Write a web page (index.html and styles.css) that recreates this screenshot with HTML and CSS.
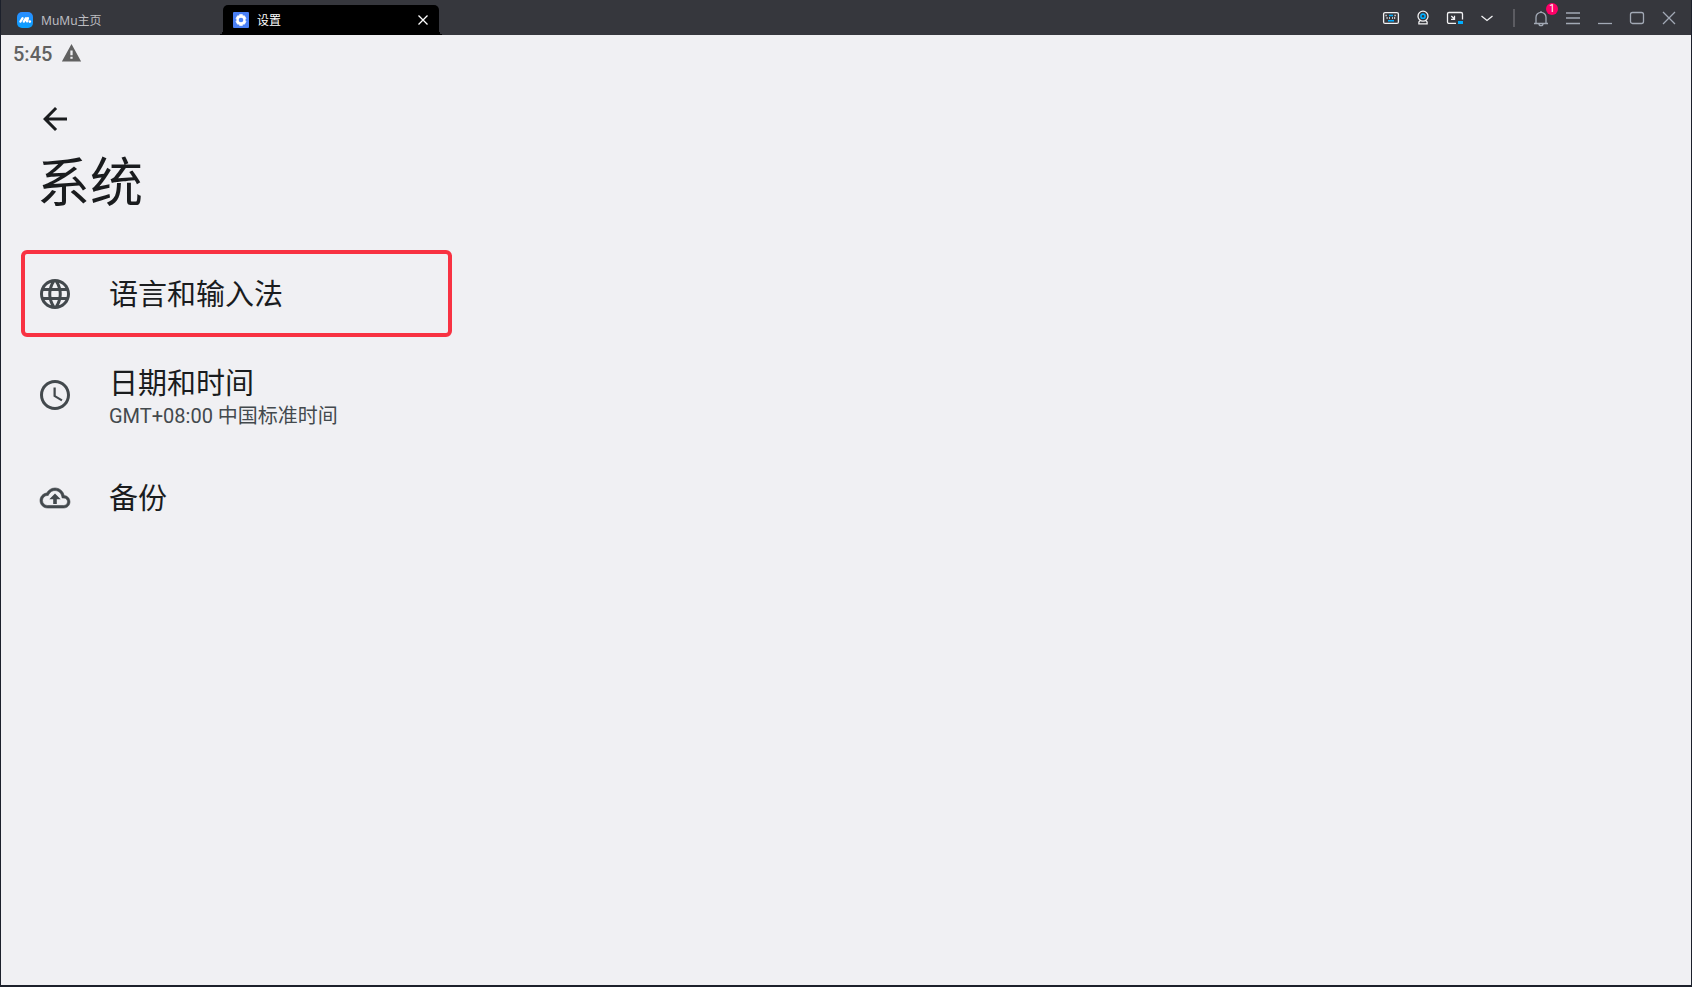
FILE: index.html
```html
<!DOCTYPE html>
<html lang="zh-CN">
<head>
<meta charset="utf-8">
<title>设置</title>
<link rel="stylesheet" href="styles.css">
</head>
<body>
<div class="window">
  <header class="titlebar">
    <nav class="tabs">
      <div class="tab">
        <button class="tab-main" type="button">
          <svg class="tab-icon" viewBox="0 0 16 16"><defs><linearGradient id="mumu" x1="0" y1="0" x2="0" y2="1"><stop offset="0" stop-color="#2b8cff"/><stop offset="1" stop-color="#08a0ff"/></linearGradient></defs><rect width="16" height="16" rx="5" fill="url(#mumu)"/><path d="M3.4 9.6L5.6 6.1M6.8 9.6L9 6.1M10 9.4L10.9 6.2" stroke="#fff" stroke-width="2.3" stroke-linecap="round"/><circle cx="12.8" cy="9.6" r="1.3" fill="#fff"/></svg>
          <span>MuMu主页</span>
        </button>
      </div>
      <div class="tab tab-active">
        <button class="tab-main" type="button">
          <svg class="tab-icon" viewBox="0 0 16 16"><rect width="16" height="16" rx="1" fill="#4a80f5"/><path d="M6.6 2.5h2.8l.5 1.5 1.5-.3 1.6 2.6-1 1.7 1 1.7-1.6 2.6-1.5-.3-.5 1.5H6.6L6.1 12l-1.5.3L3 9.7 4 8 3 6.3l1.6-2.6 1.5.3z" fill="#fff" stroke="#fff" stroke-width=".6" stroke-linejoin="round"/><circle cx="8" cy="8" r="2.3" fill="#4a80f5"/></svg>
          <span>设置</span>
        </button>
        <button class="tab-close" type="button" aria-label="关闭标签">
          <svg width="12" height="12" viewBox="0 0 12 12"><path d="M1.5 1.5l9 9M10.5 1.5l-9 9" stroke="#fff" stroke-width="1.3"/></svg>
        </button>
      </div>
    </nav>
    <div class="tools">
      <button class="tool" type="button" aria-label="键盘"><svg viewBox="0 0 18 18"><rect x="1.6" y="3.6" width="14.8" height="10.8" rx="1.5"/><path d="M3.5 6.5h2M12.5 6.5h2M4.5 9h1.5M7 9h1M10 9h1M12 9h1.5" stroke-dasharray="1.2 .8"/><path d="M7 6.5h4M6 11.8h6" class="accent"/></svg></button>
      <button class="tool" type="button" aria-label="摄像头"><svg viewBox="0 0 18 18"><circle cx="9" cy="7.2" r="5"/><circle cx="9" cy="7.2" r="2.1" class="accent"/><path d="M6 11.7L4.9 13v1.8h8.200V13L12 11.7"/></svg></button>
      <button class="tool" type="button" aria-label="小窗"><svg viewBox="0 0 18 18"><path d="M10 14.4H3a1.500 1.500 0 0 1-1.500-1.500V5A1.500 1.500 0 0 1 3 3.500h12A1.500 1.500 0 0 1 16.500 5v5.500M5.300 7l3 3M8.500 6.800v3.500H5"/><path d="M12 12h5v3h-5z" class="accent-fill"/></svg></button>
      <button class="tool" type="button" aria-label="展开"><svg viewBox="0 0 18 18"><path d="M3.5 7L9 11.5 14.5 7"/></svg></button>
      <span class="divider"></span>
      <button class="tool muted" type="button" aria-label="通知，1 条"><svg viewBox="0 0 18 18"><path d="M2 14.5h14M4 14.5V8.300a5 5 0 0 1 10 0v6.200M9 3.300V2M7 14.700a2 2 0 0 0 4 0"/></svg><span class="badge">1</span></button>
      <button class="tool muted" type="button" aria-label="菜单"><svg viewBox="0 0 18 18"><path d="M2 4h14M2 9h14M2 14.5h14"/></svg></button>
      <button class="tool muted" type="button" aria-label="最小化"><svg viewBox="0 0 18 18"><path d="M2 14.5h14"/></svg></button>
      <button class="tool muted" type="button" aria-label="最大化"><svg viewBox="0 0 18 18"><rect x="2.5" y="3.5" width="13" height="11" rx="2"/></svg></button>
      <button class="tool muted" type="button" aria-label="关闭"><svg viewBox="0 0 18 18"><path d="M3 3l12 12M15 3L3 15"/></svg></button>
    </div>
  </header>
  <div class="status">
    <span>5:45</span>
    <svg width="21" height="21" viewBox="0 0 24 24"><path d="M1 21h22L12 1zm12.300-3h-2.600v-2.400h2.600zm0-4h-2.600V8.500h2.600z" fill="#616161"/></svg>
  </div>
  <main class="page">
    <button class="back" type="button" aria-label="返回"><svg viewBox="0 0 24 24"><path d="M20 11H7.830l5.590-5.590L12 4l-8 8 8 8 1.410-1.410L7.830 13H20z" fill="#1a1c1e"/></svg></button>
    <h1 class="heading">系统</h1>
    <div class="list">
      <a class="row row-marked" href="#language">
        <svg class="row-icon" viewBox="0 0 24 24"><path d="M11.990 2C6.470 2 2 6.480 2 12s4.470 10 9.990 10C17.520 22 22 17.520 22 12S17.520 2 11.990 2zm6.930 6h-2.950c-.32-1.250-.78-2.450-1.380-3.560 1.840.63 3.370 1.910 4.330 3.560zM12 4.040c.83 1.200 1.480 2.530 1.910 3.960h-3.820c.43-1.430 1.080-2.760 1.910-3.960zM4.260 14C4.100 13.360 4 12.690 4 12s.1-1.360.26-2h3.380c-.08.66-.14 1.320-.14 2s.06 1.340.14 2H4.260zm.82 2h2.950c.32 1.250.78 2.450 1.380 3.560-1.840-.63-3.370-1.900-4.330-3.560zm2.950-8H5.080c.96-1.660 2.490-2.930 4.330-3.560C8.810 5.550 8.350 6.750 8.030 8zM12 19.960c-.83-1.200-1.480-2.530-1.910-3.960h3.820c-.43 1.430-1.080 2.760-1.910 3.960zM14.340 14H9.660c-.09-.66-.16-1.320-.16-2s.07-1.350.16-2h4.680c.09.65.16 1.320.16 2s-.07 1.340-.16 2zm.25 5.560c.6-1.110 1.060-2.310 1.380-3.560h2.950c-.96 1.650-2.490 2.930-4.330 3.560zM16.360 14c.08-.66.14-1.320.14-2s-.06-1.340-.14-2h3.380c.16.64.26 1.310.26 2s-.1 1.360-.26 2h-3.380z"/></svg>
        <span class="row-title">语言和输入法</span>
      </a>
      <a class="row row-double" href="#datetime">
        <svg class="row-icon" viewBox="0 0 24 24"><path d="M11.990 2C6.470 2 2 6.480 2 12s4.470 10 9.990 10C17.520 22 22 17.520 22 12S17.520 2 11.990 2zM12 20c-4.420 0-8-3.580-8-8s3.580-8 8-8 8 3.580 8 8-3.580 8-8 8zm.5-13H11v6l5.250 3.150.75-1.230-4.500-2.670z"/></svg>
        <span class="row-text"><span class="row-title">日期和时间</span><span class="row-sub">GMT+08:00 中国标准时间</span></span>
      </a>
      <a class="row" href="#backup">
        <svg class="row-icon" viewBox="0 0 24 24"><path d="M19.210 12.040l-1.530-.11-.3-1.500C16.880 7.860 14.620 6 12 6 9.940 6 8.080 7.140 7.120 8.960l-.5.950-1.070.11C3.530 10.240 2 11.950 2 14c0 2.210 1.790 4 4 4h13c1.650 0 3-1.350 3-3 0-1.550-1.220-2.860-2.790-2.960zm.14-2.010C18.670 6.590 15.640 4 12 4 9.110 4 6.610 5.640 5.350 8.040 2.340 8.360 0 10.910 0 14c0 3.310 2.690 6 6 6h13c2.760 0 5-2.240 5-5 0-2.640-2.050-4.780-4.650-4.970z" fill-rule="evenodd" transform="translate(2 2) scale(.8333)" stroke="#43494d" stroke-width=".5"/><path d="M8.200 12.900h2.600V16h2.400v-3.100h2.600L12 9z"/></svg>
        <span class="row-title">备份</span>
      </a>
    </div>
  </main>
</div>
</body>
</html>
```
FILE: styles.css
```css
* { box-sizing: border-box; }

body {
  margin: 0;
  background: #f0f0f3;
  font-family: Roboto, "Noto Sans CJK SC", sans-serif;
  color: #1a1c1e;
}

button {
  padding: 0;
  border: 0;
  background: none;
  color: inherit;
  font: inherit;
}

svg { display: block; flex: none; }

.window {
  min-height: 100vh;
  border: solid #1c202b;
  border-width: 0 1px 2px;
}

.titlebar {
  display: flex;
  justify-content: space-between;
  height: 35px;
  padding: 0 6px;
  background: #36373d;
}

.tabs { display: flex; align-items: flex-end; }

.tab {
  display: flex;
  align-items: center;
  justify-content: space-between;
  width: 216px;
  height: 30px;
  padding: 0 10px;
  border-radius: 5px 5px 0 0;
  color: #bdbdc1;
  font-family: "Noto Sans", "Noto Sans CJK SC", sans-serif;
  font-size: 12px;
}

.tab-active { position: relative; background: #000; color: #fff; }

/* flared feet of the open tab */
.tab-active::before,
.tab-active::after {
  content: "";
  position: absolute;
  bottom: 0;
  width: 5px;
  height: 5px;
}

.tab-active::before {
  right: 100%;
  background: radial-gradient(circle at 0 0, transparent 5px, #000 5px);
}

.tab-active::after {
  left: 100%;
  background: radial-gradient(circle at 100% 0, transparent 5px, #000 5px);
}

.tab-main { display: flex; align-items: center; gap: 8px; }

.tab-icon { width: 16px; height: 16px; }

.tools { display: flex; align-items: center; }

.tool {
  position: relative;
  display: grid;
  place-items: center;
  width: 32px;
  height: 35px;
}

.tool svg {
  width: 18px;
  height: 18px;
  fill: none;
  stroke: #f2f2f4;
  stroke-width: 1.3;
}

.tool.muted svg { stroke: #a2a9b5; stroke-width: 1.3; }

.tool svg .accent { stroke: #00aeff; stroke-width: 1.6; }

.tool svg .accent-fill { fill: #00aeff; stroke: none; }

.divider {
  width: 2px;
  height: 18px;
  margin: 0 10px;
  background: #5c5c62;
}

.badge {
  position: absolute;
  top: 3px;
  right: -1px;
  width: 12px;
  height: 12px;
  border-radius: 50%;
  background: #ff0067;
  color: #fff;
  font-size: 10px;
  line-height: 12px;
  text-align: center;
}

.status {
  display: flex;
  align-items: center;
  gap: 9px;
  height: 37px;
  padding: 0 12px;
  color: #616161;
  font-size: 20px;
  font-weight: 500;
}

.page { padding: 29px 20px; }

.back { display: block; margin-left: 16px; }

.back svg { width: 36px; height: 36px; }

.heading {
  margin: 10px 0 29px 16px;
  font-size: 53px;
  font-weight: 400;
  line-height: 74px;
}

.list { max-width: 431px; }

.row {
  display: flex;
  align-items: center;
  gap: 36px;
  min-height: 91px;
  padding: 0 16px;
  color: inherit;
  text-decoration: none;
}

.row-marked {
  min-height: 87px;
  padding: 0 12px;
  border: 4px solid #f83242;
  border-radius: 6px;
}

.row-double { min-height: 115px; }

.row-icon { width: 36px; height: 36px; fill: #43494d; }

.row-text { display: flex; flex-direction: column; padding-top: 3px; }

.row-title { padding-top: 3px; font-size: 29px; line-height: 36px; }

.row-sub { color: #43494d; font-size: 20px; line-height: 28px; }
```
